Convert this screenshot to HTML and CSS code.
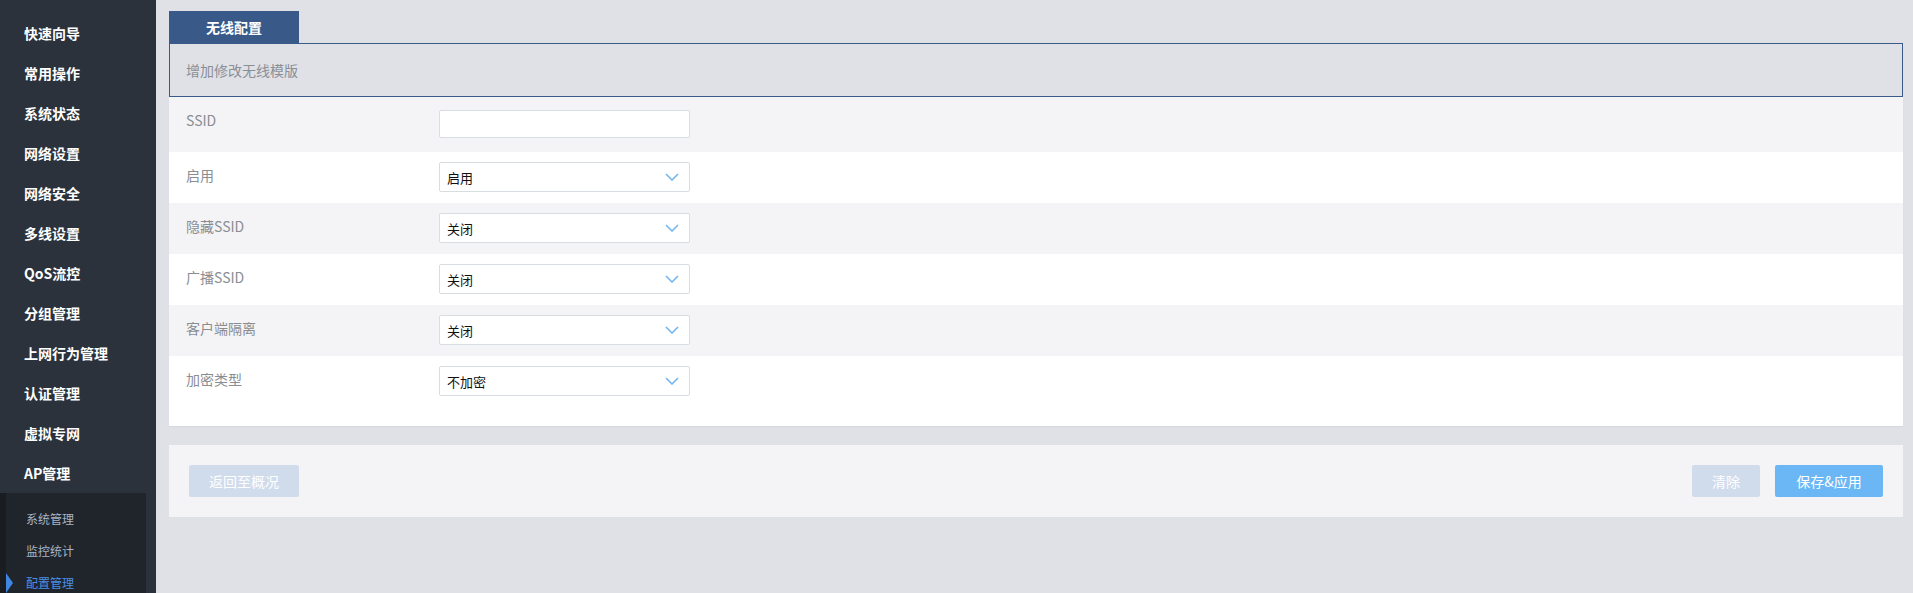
FILE: index.html
```html
<!DOCTYPE html>
<html lang="zh-CN">
<head>
    <meta charset="UTF-8">
    <title>无线配置</title>
    <link rel="stylesheet" href="styles.css">
</head>
<body>
    <div class="layout">
        <div class="sidebar">
            <div class="nav-item">快速向导</div>
            <div class="nav-item">常用操作</div>
            <div class="nav-item">系统状态</div>
            <div class="nav-item">网络设置</div>
            <div class="nav-item">网络安全</div>
            <div class="nav-item">多线设置</div>
            <div class="nav-item">QoS流控</div>
            <div class="nav-item">分组管理</div>
            <div class="nav-item">上网行为管理</div>
            <div class="nav-item">认证管理</div>
            <div class="nav-item">虚拟专网</div>
            <div class="nav-item">AP管理</div>
            <div class="submenu">
                <div class="sub-item">系统管理</div>
                <div class="sub-item">监控统计</div>
                <div class="sub-item active">配置管理</div>
            </div>
        </div>

        <div class="main">
            <div class="tabs">
                <div class="tab">无线配置</div>
            </div>
            <div class="panel-head">增加修改无线模版</div>

            <div class="form-card">
                <div class="row row-ssid">
                    <div class="row-label">SSID</div>
                    <input class="text-input" type="text">
                </div>
                <div class="row">
                    <div class="row-label">启用</div>
                    <div class="select">
                        <span>启用</span>
                        <svg width="14" height="8" viewBox="0 0 14 8"><path d="M1 1 L7 7 L13 1" fill="none" stroke="#74b6ef" stroke-width="1.6"/></svg>
                    </div>
                </div>
                <div class="row">
                    <div class="row-label">隐藏SSID</div>
                    <div class="select">
                        <span>关闭</span>
                        <svg width="14" height="8" viewBox="0 0 14 8"><path d="M1 1 L7 7 L13 1" fill="none" stroke="#74b6ef" stroke-width="1.6"/></svg>
                    </div>
                </div>
                <div class="row">
                    <div class="row-label">广播SSID</div>
                    <div class="select">
                        <span>关闭</span>
                        <svg width="14" height="8" viewBox="0 0 14 8"><path d="M1 1 L7 7 L13 1" fill="none" stroke="#74b6ef" stroke-width="1.6"/></svg>
                    </div>
                </div>
                <div class="row">
                    <div class="row-label">客户端隔离</div>
                    <div class="select">
                        <span>关闭</span>
                        <svg width="14" height="8" viewBox="0 0 14 8"><path d="M1 1 L7 7 L13 1" fill="none" stroke="#74b6ef" stroke-width="1.6"/></svg>
                    </div>
                </div>
                <div class="row">
                    <div class="row-label">加密类型</div>
                    <div class="select">
                        <span>不加密</span>
                        <svg width="14" height="8" viewBox="0 0 14 8"><path d="M1 1 L7 7 L13 1" fill="none" stroke="#74b6ef" stroke-width="1.6"/></svg>
                    </div>
                </div>
            </div>

            <div class="action-bar">
                <div class="btn btn-light btn-back">返回至概况</div>
                <div class="actions-right">
                    <div class="btn btn-light btn-clear">清除</div>
                    <div class="btn btn-primary">保存&amp;应用</div>
                </div>
            </div>
        </div>
    </div>
</body>
</html>
```

FILE: styles.css
```css
* {
    box-sizing: border-box;
}
body {
    margin: 0;
    font-family: "Noto Sans CJK SC", "Liberation Sans", sans-serif;
    font-size: 14px;
    background-color: #dfe1e6;
    height: 593px;
    overflow: hidden;
}
.layout {
    display: flex;
    height: 100%;
}

/* sidebar */
.sidebar {
    width: 156px;
    background-color: #2b323c;
    padding-top: 13px;
    flex-shrink: 0;
}
.nav-item {
    height: 40px;
    line-height: 40px;
    padding-left: 24px;
    color: #fff;
    font-weight: bold;
    font-size: 14px;
}
.submenu {
    width: 146px;
    height: 100px;
    background-color: #20252c;
    border-left: 6px solid #191d22;
    padding-top: 10px;
}
.sub-item {
    position: relative;
    height: 32px;
    line-height: 32px;
    padding-left: 20px;
    font-size: 12px;
    color: #a9b4c3;
}
.sub-item.active {
    color: #4b8fe4;
}
.sub-item.active::before {
    content: "";
    position: absolute;
    left: 0;
    top: 6px;
    border-top: 10px solid transparent;
    border-bottom: 10px solid transparent;
    border-left: 7px solid #3f86e0;
}

/* main */
.main {
    flex: 1;
    padding: 11px 10px 0 13px;
}
.tabs {
    display: flex;
}
.tab {
    width: 130px;
    height: 32px;
    line-height: 32px;
    text-align: center;
    background-color: #395a89;
    color: #fff;
    font-weight: bold;
}
.panel-head {
    height: 54px;
    line-height: 52px;
    border: 1px solid #3a5a8a;
    padding-left: 16px;
    color: #8a8f96;
}
.form-card {
    background-color: #fff;
    padding-bottom: 19px;
    box-shadow: 0 1px 1px rgba(0, 0, 0, 0.04);
}
.row {
    display: flex;
    align-items: flex-start;
    height: 51px;
    padding-left: 17px;
}
.row:nth-child(odd) {
    background-color: #f4f4f6;
}
.row-ssid {
    height: 55px;
}
.row-label {
    width: 253px;
    margin-top: 13px;
    line-height: 20px;
    color: #8a8d92;
}
.text-input {
    width: 251px;
    height: 28px;
    margin-top: 13px;
    border: 1px solid #d8dde4;
    border-radius: 2px;
    background-color: #fff;
    outline: none;
}
.select {
    display: flex;
    align-items: center;
    justify-content: space-between;
    width: 251px;
    height: 30px;
    margin-top: 10px;
    padding: 0 10px 0 7px;
    border: 1px solid #d8dde4;
    border-radius: 2px;
    background-color: #fff;
    font-size: 13px;
    color: #111;
}

/* bottom actions */
.action-bar {
    display: flex;
    justify-content: space-between;
    align-items: center;
    height: 72px;
    margin-top: 19px;
    padding: 0 20px;
    background-color: #f4f4f6;
}
.actions-right {
    display: flex;
    gap: 15px;
}
.btn {
    height: 32px;
    line-height: 32px;
    text-align: center;
    color: #fff;
    border-radius: 2px;
    font-size: 14px;
}
.btn-light {
    background-color: #d0dcec;
}
.btn-back {
    width: 110px;
}
.btn-clear {
    width: 68px;
}
.btn-primary {
    width: 108px;
    background-color: #6bb7f5;
}
```
